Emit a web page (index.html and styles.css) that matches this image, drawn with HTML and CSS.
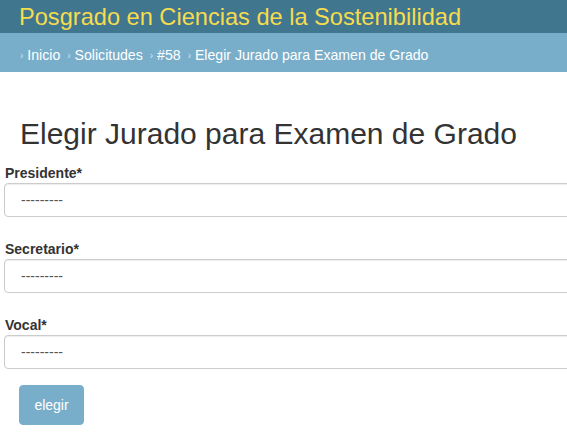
FILE: index.html
```html
<!DOCTYPE html>
<html lang="es">
<head>
<meta charset="utf-8">
<title>Elegir Jurado</title>
<link rel="stylesheet" href="styles.css">
</head>
<body>
<header class="topbar">
  <div class="brand">Posgrado en Ciencias de la Sostenibilidad</div>
</header>
<nav class="crumbs">
  <span class="sep">›</span><a href="#">Inicio</a>
  <span class="sep">›</span><a href="#">Solicitudes</a>
  <span class="sep">›</span><a href="#">#58</a>
  <span class="sep">›</span><span class="current">Elegir Jurado para Examen de Grado</span>
</nav>
<main class="content">
  <h1 class="title">Elegir Jurado para Examen de Grado</h1>
  <form class="form">
    <div class="group">
      <label class="label">Presidente*</label>
      <div class="select">---------</div>
    </div>
    <div class="group">
      <label class="label">Secretario*</label>
      <div class="select">---------</div>
    </div>
    <div class="group">
      <label class="label">Vocal*</label>
      <div class="select">---------</div>
    </div>
    <button type="button" class="btn">elegir</button>
  </form>
</main>
</body>
</html>
```
FILE: styles.css
```css
html, body {
  margin: 0;
  padding: 0;
  background: #fff;
  font-family: "Liberation Sans", Arial, sans-serif;
  color: #333;
  overflow: hidden;
}
.topbar {
  background: #41768f;
  height: 33px;
  padding-left: 19px;
  box-sizing: border-box;
}
.brand {
  color: #f5dc4e;
  font-size: 23.6px;
  line-height: 34px;
  white-space: nowrap;
}
.crumbs {
  background: #79aeca;
  height: 39px;
  box-sizing: border-box;
  padding: 5px 0 0 20px;
  display: flex;
  align-items: center;
  font-size: 14.1px;
  color: #fff;
  white-space: nowrap;
}
.crumbs a, .crumbs .current {
  color: #fff;
  text-decoration: none;
}
.crumbs .sep {
  color: #d0e4ee;
  font-size: 10px;
  margin: 0 4px 0 7px;
}
.crumbs .sep:first-child {
  margin-left: 0;
}
.content {
  padding: 0 0 0 4px;
}
.title {
  font-weight: normal;
  font-size: 30px;
  line-height: 36px;
  margin: 44px 0 0 16px;
  color: #333;
  white-space: nowrap;
}
.form {
  margin-top: 11px;
}
.group {
  margin-bottom: 22px;
}
.label {
  display: block;
  font-weight: bold;
  font-size: 14px;
  line-height: 20px;
  margin: 0 0 0 1px;
  color: #333;
}
.select {
  width: 700px;
  height: 34px;
  box-sizing: border-box;
  border: 1px solid #ccc;
  border-radius: 4px;
  box-shadow: inset 0 1px 1px rgba(0,0,0,0.075);
  padding-left: 16px;
  font-size: 14px;
  line-height: 32px;
  color: #555;
}
.btn {
  margin: -6px 0 0 15px;
  display: block;
  width: 65px;
  height: 40px;
  background: #79aeca;
  border: 1px solid #79aeca;
  border-radius: 4px;
  color: #fff;
  font-family: "Liberation Sans", Arial, sans-serif;
  font-size: 14px;
  padding: 0;
}
```
